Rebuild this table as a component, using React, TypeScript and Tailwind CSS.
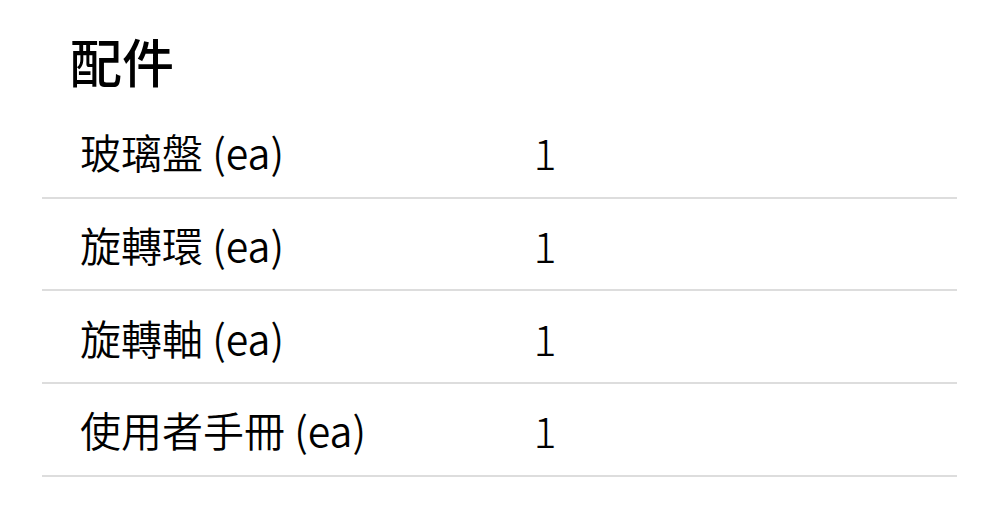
const items = [
  { name: '玻璃盤', qty: 1 },
  { name: '旋轉環', qty: 1 },
  { name: '旋轉軸', qty: 1 },
  { name: '使用者手冊', qty: 1 },
]

function App() {
  return (
    <div className="min-h-[530px] w-[1000px] bg-white pl-[42px] pr-[43px] text-black" style={{ fontFamily: '"Noto Sans CJK TC", "Noto Sans", sans-serif' }}>
      <h2 className="pl-[28px] pt-[25px] text-[52px] font-medium leading-[72px]">配件</h2>
      <div className="mt-[9px]">
        {items.map((it) => (
          <div key={it.name} className="grid h-[92.7px] grid-cols-2 items-center border-b-2 border-[#dddddd]">
            <div className="pl-[38px] text-[41px] font-[350] leading-[50px]">{it.name} (ea)</div>
            <div className="pl-[34px] text-[43px] font-extralight leading-[50px]">{it.qty}</div>
          </div>
        ))}
      </div>
    </div>
  )
}

export default App
